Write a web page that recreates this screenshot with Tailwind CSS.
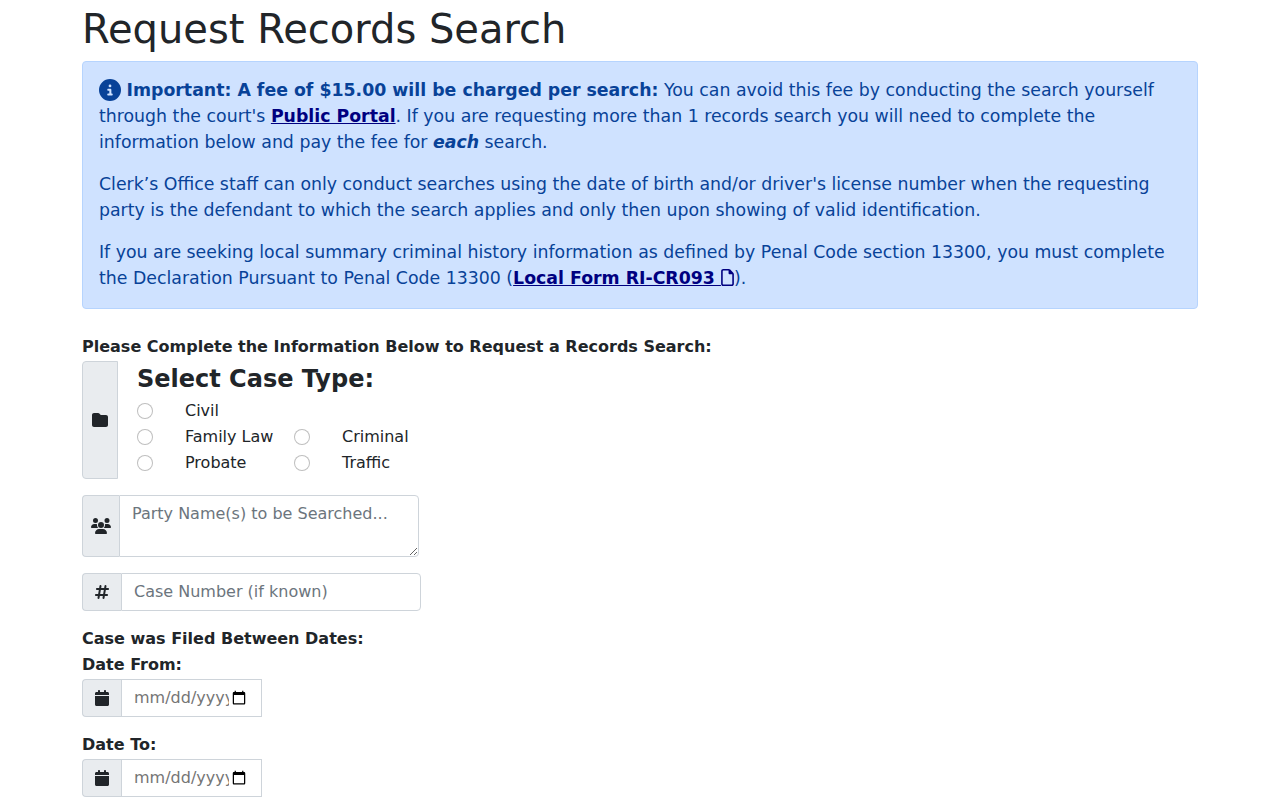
<!DOCTYPE html>
<html lang="en">
   <head>
      <meta charset="UTF-8" />
      <meta name="viewport" content="width=device-width, initial-scale=1.0" />
      <script src="https://cdn.jsdelivr.net/npm/@tailwindcss/browser@4"></script>
      <title>Request Records Search</title>
   </head>

   <body class="bg-white text-[#212529] font-['DejaVu_Sans',sans-serif] text-base leading-[26px]">
      <main class="max-w-[1140px] mx-auto px-3 pt-[5px]">
         <h1 class="text-[40px] leading-12 mb-2">Request Records Search</h1>

         <!-- Fee notice -->
         <div
            role="alert"
            class="bg-[#cfe2ff] border border-[#b6d4fe] rounded text-[#084298] text-[13pt] leading-[26px] px-4 pt-[15px] pb-[17px] mb-6 space-y-4"
         >
            <p>
               <svg class="inline-block size-[22px] align-[-5px]" viewBox="0 0 512 512" fill="currentColor" aria-hidden="true">
                  <path d="M256 512A256 256 0 1 0 256 0a256 256 0 1 0 0 512zM216 336l24 0 0-64-24 0c-13.3 0-24-10.7-24-24s10.7-24 24-24l48 0c13.3 0 24 10.7 24 24l0 88 8 0c13.3 0 24 10.7 24 24s-10.7 24-24 24l-80 0c-13.3 0-24-10.7-24-24s10.7-24 24-24zm40-208a32 32 0 1 1 0 64 32 32 0 1 1 0-64z" />
               </svg>
               <strong>Important: A fee of $15.00 will be charged per search:</strong>
               You can avoid this fee by conducting the search yourself through
               the court's
               <a href="#" class="font-bold underline text-[#000080]">Public Portal</a>.
               If you are requesting more than 1 records search you will need to
               complete the information below and pay the fee for
               <strong><em>each</em></strong> search.
            </p>
            <p>
               Clerk’s Office staff can only conduct searches using the date of
               birth and/or driver's license number when the requesting party is
               the defendant to which the search applies and only then upon
               showing of valid identification.
            </p>
            <p>
               If you are seeking local summary criminal history information as
               defined by Penal Code section 13300, you must complete the
               Declaration Pursuant to Penal Code 13300 (<a href="#" class="font-bold underline text-[#000080]">Local Form RI-CR093
                  <svg class="inline-block w-[13px] h-[17px] align-[-2px]" viewBox="0 0 384 512" fill="currentColor" aria-hidden="true"><path d="M320 464c8.8 0 16-7.2 16-16V160H256c-17.7 0-32-14.3-32-32V48H64c-8.8 0-16 7.2-16 16V448c0 8.8 7.2 16 16 16H320zM0 64C0 28.7 28.7 0 64 0H229.5c17 0 33.3 6.7 45.3 18.7l90.5 90.5c12 12 18.7 28.3 18.7 45.3V448c0 35.3-28.7 64-64 64H64c-35.3 0-64-28.7-64-64V64z" /></svg></a>).
            </p>
         </div>

         <form>
            <p class="font-bold leading-7">
               Please Complete the Information Below to Request a Records Search:
            </p>

            <!-- Case type -->
            <div class="flex mb-4">
               <span class="flex items-center px-[9px] bg-[#e9ecef] border border-[#ced4da] rounded-l">
                  <svg class="size-4" viewBox="0 0 512 512" fill="currentColor" aria-hidden="true">
                     <path d="M64 480H448c35.3 0 64-28.7 64-64V160c0-35.3-28.7-64-64-64H288c-10.1 0-19.6-4.7-25.6-12.8L243.2 57.6C231.1 41.5 212.1 32 192 32H64C28.7 32 0 60.7 0 96V416c0 35.3 28.7 64 64 64z" />
                  </svg>
               </span>
               <fieldset class="pl-[19px] pb-[3px]">
                  <legend class="text-2xl leading-9 font-bold">Select Case Type:</legend>
                  <div class="grid grid-cols-[48px_109px_48px_auto] items-center pt-px">
                     <input type="radio" name="case_type" id="civil" class="appearance-none size-4 rounded-full border border-black/25 bg-white checked:border-[5px] checked:border-[#0d6efd]" />
                     <label for="civil" class="col-span-3">Civil</label>
                     <input type="radio" name="case_type" id="family" class="appearance-none size-4 rounded-full border border-black/25 bg-white checked:border-[5px] checked:border-[#0d6efd]" />
                     <label for="family">Family Law</label>
                     <input type="radio" name="case_type" id="criminal" class="appearance-none size-4 rounded-full border border-black/25 bg-white checked:border-[5px] checked:border-[#0d6efd]" />
                     <label for="criminal">Criminal</label>
                     <input type="radio" name="case_type" id="probate" class="appearance-none size-4 rounded-full border border-black/25 bg-white checked:border-[5px] checked:border-[#0d6efd]" />
                     <label for="probate">Probate</label>
                     <input type="radio" name="case_type" id="traffic" class="appearance-none size-4 rounded-full border border-black/25 bg-white checked:border-[5px] checked:border-[#0d6efd]" />
                     <label for="traffic">Traffic</label>
                  </div>
               </fieldset>
            </div>

            <!-- Party names -->
            <div class="flex mb-4">
               <label for="party" class="flex items-center px-2 bg-[#e9ecef] border border-r-0 border-[#ced4da] rounded-l">
                  <svg class="w-5 h-4" viewBox="0 0 640 512" fill="currentColor" role="img" aria-label="Party Name(s)">
                     <path d="M144 0a80 80 0 1 1 0 160A80 80 0 1 1 144 0zM512 0a80 80 0 1 1 0 160A80 80 0 1 1 512 0zM0 298.7C0 239.8 47.8 192 106.7 192h42.7c15.9 0 31 3.5 44.6 9.7c-1.3 7.2-1.9 14.7-1.9 22.3c0 38.2 16.8 72.5 43.3 96c-.2 0-.4 0-.7 0H21.3C9.6 320 0 310.4 0 298.7zM405.3 320c-.2 0-.4 0-.7 0c26.6-23.5 43.3-57.8 43.3-96c0-7.6-.7-15-1.9-22.3c13.6-6.3 28.7-9.7 44.6-9.7h42.7C592.2 192 640 239.8 640 298.7c0 11.8-9.6 21.3-21.3 21.3H405.3zM224 224a96 96 0 1 1 192 0 96 96 0 1 1 -192 0zM128 485.3C128 411.7 187.7 352 261.3 352H378.7C452.3 352 512 411.7 512 485.3c0 14.7-11.9 26.7-26.7 26.7H154.7c-14.7 0-26.7-11.9-26.7-26.7z" />
                  </svg>
               </label>
               <textarea
                  id="party"
                  name="party"
                  rows="2"
                  placeholder="Party Name(s) to be Searched..."
                  class="w-[300px] px-3 py-[6px] leading-6 bg-white border border-[#ced4da] rounded-r placeholder:text-[#6c757d]"
               ></textarea>
            </div>

            <!-- Case number -->
            <div class="flex mb-4">
               <label for="case_number" class="flex items-center px-3 bg-[#e9ecef] border border-r-0 border-[#ced4da] rounded-l">
                  <svg class="w-[14px] h-4" viewBox="0 0 448 512" fill="currentColor" role="img" aria-label="Case Number">
                     <path d="M181.3 32.4c17.4 2.9 29.2 19.4 26.3 36.8L197.8 128h95.1l11.5-69.3c2.9-17.4 19.4-29.2 36.8-26.3s29.2 19.4 26.3 36.8L357.8 128H416c17.7 0 32 14.3 32 32s-14.3 32-32 32H347.1L325.8 320H384c17.7 0 32 14.3 32 32s-14.3 32-32 32H315.1l-11.5 69.3c-2.9 17.4-19.4 29.2-36.8 26.3s-29.2-19.4-26.3-36.8l9.8-58.7H155.1l-11.5 69.3c-2.9 17.4-19.4 29.2-36.8 26.3s-29.2-19.4-26.3-36.8L90.2 384H32c-17.7 0-32-14.3-32-32s14.3-32 32-32h68.9l21.3-128H64c-17.7 0-32-14.3-32-32s14.3-32 32-32h68.9l11.5-69.3c2.9-17.4 19.4-29.2 36.8-26.3zM187.1 192L165.8 320h95.1l21.3-128H187.1z" />
                  </svg>
               </label>
               <input
                  type="text"
                  id="case_number"
                  name="case_number"
                  placeholder="Case Number (if known)"
                  class="w-[300px] px-3 py-[6px] leading-6 bg-white border border-[#ced4da] rounded-r placeholder:text-[#6c757d]"
               />
            </div>

            <!-- Filing dates -->
            <p class="font-bold leading-6 pb-[2px]">Case was Filed Between Dates:</p>
            <label for="date_from" class="block font-bold leading-6 pb-[2px]">Date From:</label>
            <div class="flex mb-4">
               <span class="flex items-center px-3 bg-[#e9ecef] border border-r-0 border-[#ced4da] rounded-l">
                  <svg class="w-[14px] h-4" viewBox="0 0 448 512" fill="currentColor" aria-hidden="true">
                     <path d="M96 32V64H48C21.5 64 0 85.5 0 112v48H448V112c0-26.5-21.5-48-48-48H352V32c0-17.7-14.3-32-32-32s-32 14.3-32 32V64H160V32c0-17.7-14.3-32-32-32S96 14.3 96 32zM448 192H0V464c0 26.5 21.5 48 48 48H400c26.5 0 48-21.5 48-48V192z" />
                  </svg>
               </span>
               <input
                  type="date"
                  id="date_from"
                  name="date_from"
                  class="w-[141px] h-[38px] px-3 py-[6px] leading-6 bg-white border border-[#ced4da] text-[#757575] [&::-webkit-datetime-edit-month-field]:p-0 [&::-webkit-datetime-edit-day-field]:p-0 [&::-webkit-datetime-edit-year-field]:p-0 [&::-webkit-datetime-edit-text]:p-0"
               />
            </div>

            <label for="date_to" class="block font-bold leading-6 pb-[2px]">Date To:</label>
            <div class="flex">
               <span class="flex items-center px-3 bg-[#e9ecef] border border-r-0 border-[#ced4da] rounded-l">
                  <svg class="w-[14px] h-4" viewBox="0 0 448 512" fill="currentColor" aria-hidden="true">
                     <path d="M96 32V64H48C21.5 64 0 85.5 0 112v48H448V112c0-26.5-21.5-48-48-48H352V32c0-17.7-14.3-32-32-32s-32 14.3-32 32V64H160V32c0-17.7-14.3-32-32-32S96 14.3 96 32zM448 192H0V464c0 26.5 21.5 48 48 48H400c26.5 0 48-21.5 48-48V192z" />
                  </svg>
               </span>
               <input
                  type="date"
                  id="date_to"
                  name="date_to"
                  class="w-[141px] h-[38px] px-3 py-[6px] leading-6 bg-white border border-[#ced4da] text-[#757575] [&::-webkit-datetime-edit-month-field]:p-0 [&::-webkit-datetime-edit-day-field]:p-0 [&::-webkit-datetime-edit-year-field]:p-0 [&::-webkit-datetime-edit-text]:p-0"
               />
            </div>
         </form>
      </main>
   </body>
</html>
